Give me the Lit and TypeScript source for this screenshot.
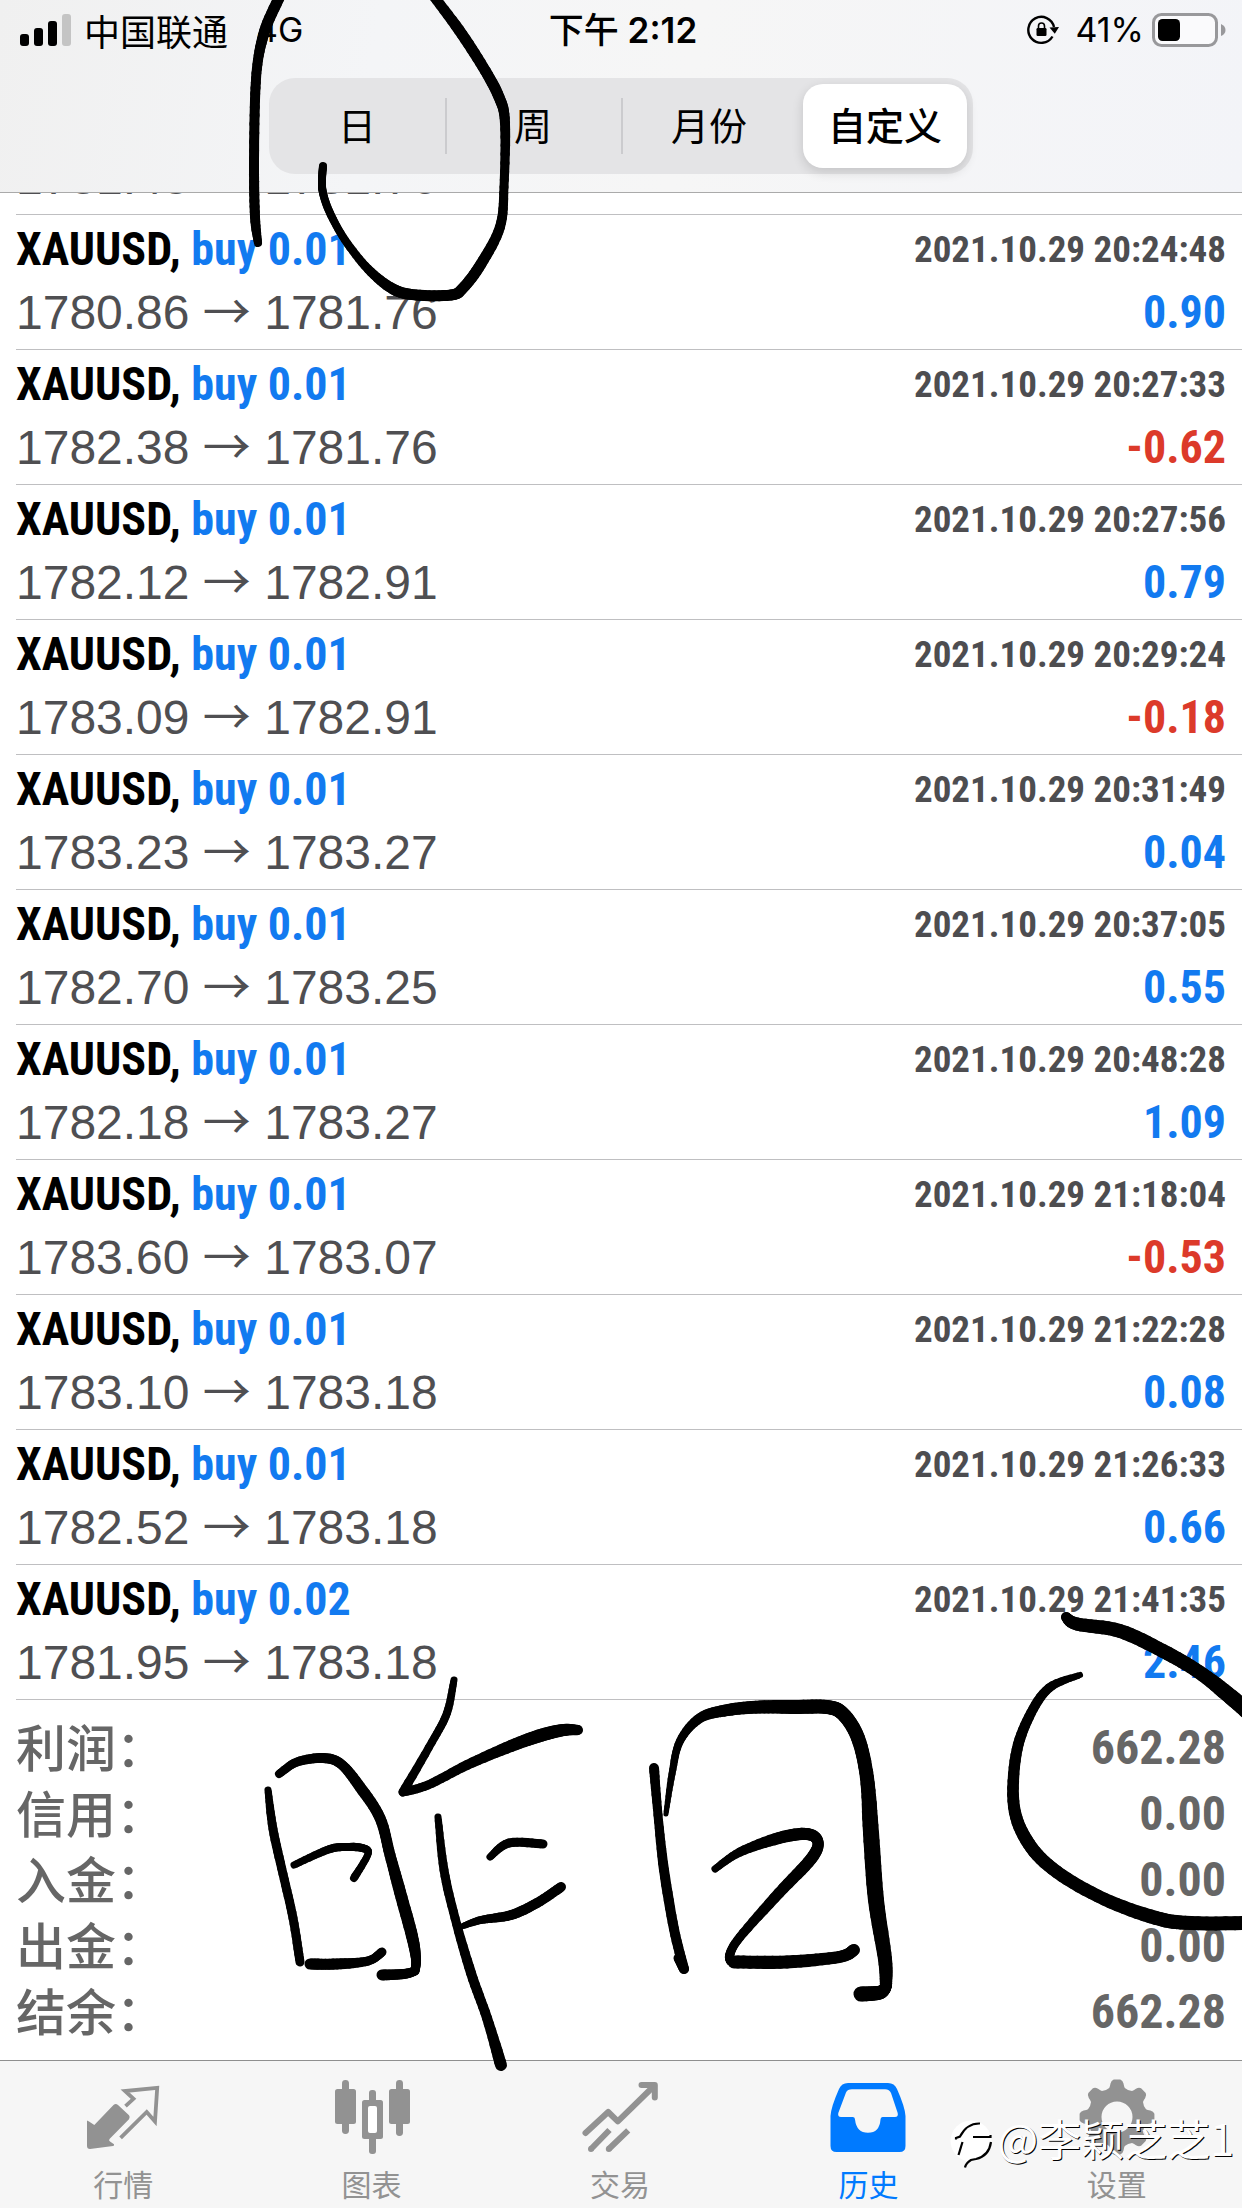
import { LitElement, html, svg, css } from "lit";
import { customElement, state } from "lit/decorators.js";
import { classMap } from "lit/directives/class-map.js";

interface Deal {
  side?: string;
  time?: string;
  open: string;
  close: string;
  profit: string;
}

const DEALS: Deal[] = [
  { open: "1781.43", close: "1781.76", profit: "0.33" },
  { side: "buy 0.01", time: "2021.10.29 20:24:48", open: "1780.86", close: "1781.76", profit: "0.90" },
  { side: "buy 0.01", time: "2021.10.29 20:27:33", open: "1782.38", close: "1781.76", profit: "-0.62" },
  { side: "buy 0.01", time: "2021.10.29 20:27:56", open: "1782.12", close: "1782.91", profit: "0.79" },
  { side: "buy 0.01", time: "2021.10.29 20:29:24", open: "1783.09", close: "1782.91", profit: "-0.18" },
  { side: "buy 0.01", time: "2021.10.29 20:31:49", open: "1783.23", close: "1783.27", profit: "0.04" },
  { side: "buy 0.01", time: "2021.10.29 20:37:05", open: "1782.70", close: "1783.25", profit: "0.55" },
  { side: "buy 0.01", time: "2021.10.29 20:48:28", open: "1782.18", close: "1783.27", profit: "1.09" },
  { side: "buy 0.01", time: "2021.10.29 21:18:04", open: "1783.60", close: "1783.07", profit: "-0.53" },
  { side: "buy 0.01", time: "2021.10.29 21:22:28", open: "1783.10", close: "1783.18", profit: "0.08" },
  { side: "buy 0.01", time: "2021.10.29 21:26:33", open: "1782.52", close: "1783.18", profit: "0.66" },
  { side: "buy 0.02", time: "2021.10.29 21:41:35", open: "1781.95", close: "1783.18", profit: "2.46" },
];

const TOTALS: [string, string][] = [
  ["利润：", "662.28"],
  ["信用：", "0.00"],
  ["入金：", "0.00"],
  ["出金：", "0.00"],
  ["结余：", "662.28"],
];

const PERIODS = ["日", "周", "月份", "自定义"];

/** Outline of an eight-toothed gear centred on 38,38. */
function gearPath(): string {
  const at = (r: number, deg: number) => {
    const a = ((deg - 90) * Math.PI) / 180;
    return `${(38 + r * Math.cos(a)).toFixed(1)} ${(38 + r * Math.sin(a)).toFixed(1)}`;
  };
  let d = "";
  for (let i = 0; i < 8; i++) {
    const c = i * 45;
    d += `${i ? "L" : "M"}${at(30, c - 15)}Q${at(31, c - 13)} ${at(34, c - 11)}`;
    d += `Q${at(37, c - 9)} ${at(37.5, c - 5)}L${at(37.5, c + 5)}`;
    d += `Q${at(37, c + 9)} ${at(34, c + 11)}Q${at(31, c + 13)} ${at(30, c + 15)}`;
    d += `Q${at(28.5, c + 22.5)} ${at(30, c + 30)}`;
  }
  return d + "ZM38 22.5a15.5 15.5 0 1 0 0 31a15.5 15.5 0 1 0 0-31Z";
}

const TABS = [
  {
    label: "行情",
    icon: svg`
      <path fill="currentColor" d="M2 41.5L4 42.5L9.3 46L28.5 26Q30.7 24 33 26L44 36.2Q45.6 38.3 44 40.3L24.5 60Q23.5 61.5 25 62.6L29 65.2Q29.5 66.6 28 67L5 70Q2 70 2 67Z"/>
      <path fill="none" stroke="currentColor" stroke-width="3.8" d="M40.5 27.2L48.5 19.8L40 12L72.2 8.9L70 42.5L61.7 33L35.6 58.8"/>`,
  },
  {
    label: "图表",
    icon: svg`
      <g fill="currentColor">
        <rect x="8" y="1" width="7" height="54" rx="3.4"/><rect x="1" y="10" width="21" height="35" rx="2.5"/>
        <rect x="35" y="11" width="7" height="64" rx="3"/><rect x="28" y="21" width="21" height="39" rx="2.5"/>
        <rect x="62" y="1" width="7" height="56" rx="3.4"/><rect x="55" y="10" width="21" height="35" rx="2.5"/>
      </g>
      <rect fill="#fff" x="34" y="27" width="9" height="27" rx="2"/>`,
  },
  {
    label: "交易",
    icon: svg`
      <g fill="none" stroke="currentColor" stroke-width="6">
        <path stroke-linecap="round" stroke-linejoin="round" d="M3.5 54L26.2 33L35.8 42.3L72 7"/>
        <path stroke-linecap="round" stroke-linejoin="round" d="M59.5 6H72.8V18.5"/>
        <path d="M9 70L27.5 51M26.8 70L46.2 51.3"/>
      </g>
      <circle fill="currentColor" cx="9" cy="70" r="3"/><circle fill="currentColor" cx="26.8" cy="70" r="3"/>`,
  },
  {
    label: "历史",
    icon: svg`<path fill="currentColor" fill-rule="evenodd" d="M.5 37Q1 28 9 10Q11.500 4 18 4H58Q64.500 4 67 10Q75 28 75.500 37V67Q75.500 73 69.500 73H6.500Q.5 73 .5 67ZM22 10.200Q17.500 10.200 16 13.500L8.300 34Q7.500 38 11 38H23Q25 38 25 40.500Q26.500 53.800 38 53.800Q49.500 53.800 50.500 40.500Q50.500 38 52.500 38H65Q68.500 38 67.700 34L61 14Q59.500 10.200 55 10.200Z"/>`,
  },
  { label: "设置", icon: svg`<path fill="currentColor" fill-rule="evenodd" d=${gearPath()}/>` },
];

type Pt = [number, number, number];

/** Freehand pen strokes: each point is x, y and pen width. */
const STROKES: Pt[][] = [
  [[281, -6, 11], [266, 27, 11], [258, 60, 10], [255, 100, 10], [254, 167, 10], [255, 217, 10], [258, 243, 8]],
  [[432, -6, 10], [459, 30, 11], [483, 67, 11], [499, 97, 11], [505, 123, 10], [504, 187, 9], [500, 227, 10], [481, 264, 11], [463, 288, 11], [451, 295, 11], [416, 295, 11], [393, 289, 11], [368, 269, 9], [345, 240, 8], [330, 213, 8], [323, 193, 8], [322, 180, 8], [323, 166, 8]],
  [[454, 1680, 7], [447, 1713, 8], [432, 1742, 8], [403, 1792, 9]],
  [[403, 1792, 9], [428, 1785, 9], [467, 1765, 10], [511, 1746, 12], [542, 1735, 13], [564, 1730, 12], [578, 1730, 10]],
  [[279, 1774, 8], [297, 1762, 9], [323, 1758, 10], [341, 1764, 10], [360, 1787, 11], [380, 1818, 11], [390, 1855, 11], [400, 1892, 12], [412, 1936, 12], [416, 1959, 10], [415, 1971, 9]],
  [[415, 1971, 9], [404, 1974, 10], [382, 1975, 11]],
  [[268, 1790, 7], [273, 1829, 9], [283, 1874, 9], [293, 1918, 9], [300, 1962, 9]],
  [[294, 1865, 7], [327, 1850, 8], [344, 1847, 8], [362, 1848, 8], [368, 1854, 7], [354, 1878, 8]],
  [[310, 1964, 11], [337, 1964, 11], [368, 1961, 9], [382, 1952, 9]],
  [[438, 1817, 7], [444, 1870, 9], [455, 1918, 9], [471, 1973, 10], [487, 2018, 10], [501, 2065, 12]],
  [[490, 1857, 7], [509, 1843, 9], [543, 1844, 9]],
  [[463, 1926, 6], [481, 1920, 8], [511, 1915, 10], [537, 1903, 10], [561, 1887, 10]],
  [[654, 1768, 10], [658, 1815, 9], [664, 1870, 10], [674, 1929, 10], [684, 1969, 10]],
  [[678, 1958, 9], [684, 1969, 10]],
  [[666, 1814, 5], [672, 1774, 7], [680, 1741, 8], [700, 1718, 10], [728, 1710, 12], [760, 1707, 13], [795, 1707, 14], [827, 1707, 14], [843, 1714, 14], [858, 1738, 14], [867, 1778, 14], [871, 1833, 16], [876, 1900, 16], [885, 1959, 14], [886, 1985, 12]],
  [[886, 1985, 12], [884, 1990, 12], [878, 1993, 14], [861, 1994, 15]],
  [[715, 1869, 7], [740, 1852, 9], [779, 1838, 12], [807, 1834, 12], [818, 1842, 11], [811, 1859, 12], [779, 1893, 11], [740, 1937, 9], [730, 1954, 9], [731, 1961, 10]],
  [[734, 1962, 13], [787, 1962, 13], [839, 1957, 12], [854, 1950, 12]],
  [[1066, 1617, 10], [1077, 1624, 13], [1120, 1631, 14], [1163, 1651, 14], [1199, 1672, 14], [1231, 1697, 16], [1256, 1719, 16]],
  [[1080, 1675, 6], [1049, 1688, 9], [1029, 1717, 10], [1016, 1755, 11], [1014, 1807, 12], [1029, 1844, 13], [1057, 1872, 13], [1104, 1899, 13], [1156, 1918, 14], [1191, 1923, 14], [1256, 1923, 14]],
];

/** Smooths a stroke through its points and draws it as short round-capped pieces. */
function penStroke(pts: Pt[]) {
  const steps = 8;
  const out: Pt[] = [];
  for (let i = 0; i < pts.length - 1; i++) {
    const p0 = pts[Math.max(0, i - 1)];
    const p1 = pts[i];
    const p2 = pts[i + 1];
    const p3 = pts[Math.min(pts.length - 1, i + 2)];
    const mix = (k: number, t: number) =>
      0.5 *
      (2 * p1[k] +
        (p2[k] - p0[k]) * t +
        (2 * p0[k] - 5 * p1[k] + 4 * p2[k] - p3[k]) * t * t +
        (3 * p1[k] - p0[k] - 3 * p2[k] + p3[k]) * t * t * t);
    for (let s = 0; s < steps; s++) {
      const t = s / steps;
      out.push([mix(0, t), mix(1, t), mix(2, t)]);
    }
  }
  out.push(pts[pts.length - 1]);
  return out.slice(1).map((p, i) => {
    const q = out[i];
    return svg`<path d="M${q[0].toFixed(1)} ${q[1].toFixed(1)}L${p[0].toFixed(1)} ${p[1].toFixed(1)}" stroke-width=${((p[2] + q[2]) / 2).toFixed(1)}/>`;
  });
}

@customElement("app-root")
export class AppRoot extends LitElement {
  @state() private period = 3;
  @state() private tab = 3;

  static styles = css`
    :host {
      display: block;
      font-family: "Inter", "Noto Sans CJK SC", sans-serif;
      color: #000;
    }
    .screen {
      position: relative;
      display: flex;
      flex-direction: column;
      height: 100vh;
      overflow: hidden;
      background: #fff;
    }
    .top {
      flex: none;
      background: linear-gradient(100deg, #f0f0f0 0%, #f4f5f7 30%, #f6f6f6 55%, #f3f4f8 100%);
      border-bottom: 1px solid #aaa;
    }
    .status {
      display: grid;
      grid-template-columns: 1fr auto 1fr;
      align-items: center;
      height: 60px;
      padding: 0 16px 0 20px;
      font-size: 34px;
      line-height: 60px;
      white-space: nowrap;
    }
    .carrier,
    .power {
      display: flex;
      align-items: center;
    }
    .carrier {
      gap: 12px;
    }
    .operator {
      font-family: "Noto Sans CJK SC", sans-serif;
      font-size: 36px;
      line-height: 56px;
      margin-right: 16px;
    }
    .clock {
      font-weight: 600;
      font-size: 35px;
    }
    .clock-part {
      font-family: "Noto Sans CJK SC", sans-serif;
      font-weight: 500;
      line-height: 0;
    }
    .power {
      justify-content: flex-end;
      gap: 8px;
    }
    .lock {
      margin-right: 8px;
    }
    .segments {
      display: grid;
      grid-template-columns: repeat(4, 1fr);
      width: 704px;
      max-width: 90%;
      height: 96px;
      margin: 18px auto;
      border-radius: 26px;
      background: #e4e4e6;
    }
    .cell {
      display: grid;
      align-items: center;
      background: linear-gradient(#cbcbce, #cbcbce) left center / 2px 56px no-repeat;
    }
    .cell.plain {
      background: none;
    }
    .segment {
      height: 84px;
      margin: 0 6px;
      padding: 0 0 4px;
      border: 0;
      border-radius: 20px;
      background: none;
      color: #000;
      font: 400 38px/80px "Noto Sans CJK SC", sans-serif;
    }
    .segment.on {
      background: #fff;
      font-weight: 500;
      box-shadow: 0 4px 12px rgba(0, 0, 0, 0.14);
    }
    .history {
      flex: 1;
      min-height: 0;
      display: flex;
      flex-direction: column;
      justify-content: flex-end;
      overflow: hidden;
    }
    .deals {
      list-style: none;
      margin: 0;
      padding: 0 0 0 16px;
    }
    .deal {
      padding: 3px 16px 5px 0;
      border-bottom: 1px solid #bfbfc1;
    }
    .line {
      display: flex;
      justify-content: space-between;
      align-items: center;
      height: 63px;
      line-height: 63px;
      white-space: nowrap;
    }
    .symbol,
    .profit,
    .time {
      font-family: "Roboto Condensed", "Roboto", sans-serif;
      font-weight: 700;
      font-size: 46px;
    }
    .side,
    .profit {
      color: #127af0;
    }
    .time {
      font-size: 37px;
      color: #4d4d50;
    }
    .prices {
      font-family: "Liberation Sans", Arial, sans-serif;
      font-size: 48px;
      color: #4f4f52;
    }
    .arrow {
      font-family: "Noto Sans CJK SC", sans-serif;
      line-height: 0;
    }
    .profit.loss {
      color: #dc3a2a;
    }
    .totals {
      margin: 0;
      padding: 15px 16px;
      color: #666;
    }
    .total {
      display: flex;
      justify-content: space-between;
      height: 66px;
      line-height: 66px;
    }
    .name {
      font-family: "Noto Sans CJK SC", sans-serif;
      font-weight: 500;
      font-size: 50px;
      line-height: 60px;
    }
    .sum {
      margin: 0;
      font-family: "Roboto Condensed", "Roboto", sans-serif;
      font-weight: 700;
      font-size: 48px;
    }
    .tabs {
      flex: none;
      display: grid;
      grid-template-columns: repeat(5, 1fr);
      border-top: 1px solid #8f8f8f;
      background: #f6f6f6;
    }
    .tab {
      display: flex;
      flex-direction: column;
      align-items: center;
      gap: 10px;
      padding: 18px 2px 7px 0;
      border: 0;
      background: none;
      color: #929292;
      font: 400 30px/36px "Noto Sans CJK SC", sans-serif;
    }
    .tab.on {
      color: #007aff;
    }
    .ink {
      position: absolute;
      inset: 0;
      width: 100%;
      height: 100%;
      pointer-events: none;
    }
    .signature {
      position: absolute;
      right: 8px;
      bottom: 40px;
      display: flex;
      align-items: flex-start;
      gap: 4px;
      color: #fff;
      font: 400 43px/38px "Noto Sans CJK SC", sans-serif;
      text-shadow: 1px 1px 0 #000;
      pointer-events: none;
    }
    svg {
      display: block;
      flex: none;
    }
  `;

  private renderDeal(d: Deal) {
    return html`<li class="deal">
      ${d.side
        ? html`<div class="line">
            <span class="symbol">XAUUSD, <span class="side">${d.side}</span></span>
            <time class="time">${d.time}</time>
          </div>`
        : null}
      <div class="line">
        <span class="prices">${d.open} <span class="arrow">→</span> ${d.close}</span>
        <span class=${classMap({ profit: true, loss: d.profit.startsWith("-") })}>${d.profit}</span>
      </div>
    </li>`;
  }

  render() {
    return html`<div class="screen">
      <header class="top">
        <div class="status">
          <div class="carrier">
            <svg width="52" height="34" viewBox="0 0 52 34">
              <rect x="0" y="21" width="9" height="12" rx="3" />
              <rect x="14" y="15" width="9" height="18" rx="3" />
              <rect x="28" y="8" width="9" height="25" rx="3" />
              <rect x="42" y="1" width="9" height="32" rx="3" fill="#c4c4c4" />
            </svg>
            <span class="operator">中国联通</span>
            <span>4G</span>
          </div>
          <div class="clock"><span class="clock-part">下午</span> 2:12</div>
          <div class="power">
            <svg class="lock" width="32" height="30" viewBox="0 0 32 30">
              <path d="M25.5 21.500A13 13 0 1 1 27 12" fill="none" stroke="#000" stroke-width="2.400" />
              <path d="M22.500 12.500L32 12L27.800 18.800Z" />
              <rect x="9.500" y="13" width="10" height="8" rx="1.200" />
              <path d="M11.500 13.500V11a3 3 0 0 1 6 0V13.500" fill="none" stroke="#000" stroke-width="1.600" />
            </svg>
            <span>41%</span>
            <svg width="74" height="34" viewBox="0 0 74 34">
              <rect x="1.500" y="1.500" width="63" height="31" rx="8" fill="#fafafc" stroke="#98989b" stroke-width="3" />
              <rect x="6" y="6" width="22" height="22" rx="4.500" />
              <path d="M69 11Q73.500 13 73.500 17T69 23Z" fill="#98989b" />
            </svg>
          </div>
        </div>
        <div class="segments">
          ${PERIODS.map(
            (p, i) => html`<div class=${classMap({ cell: true, plain: i === 0 || i === this.period })}>
              <button
                class=${classMap({ segment: true, on: i === this.period })}
                aria-pressed=${i === this.period}
                @click=${() => (this.period = i)}
              >${p}</button>
            </div>`,
          )}
        </div>
      </header>

      <main class="history">
        <ul class="deals">${DEALS.map((d) => this.renderDeal(d))}</ul>
        <dl class="totals">
          ${TOTALS.map(([k, v]) => html`<div class="total"><dt class="name">${k}</dt><dd class="sum">${v}</dd></div>`)}
        </dl>
      </main>

      <nav class="tabs">
        ${TABS.map(
          (t, i) => html`<button class=${classMap({ tab: true, on: i === this.tab })} @click=${() => (this.tab = i)}>
            <svg width="76" height="76" viewBox="0 0 76 76">${t.icon}</svg>
            <span>${t.label}</span>
          </button>`,
        )}
      </nav>

      <svg class="ink" viewBox="0 0 1242 2208" preserveAspectRatio="none">
        <g fill="none" stroke="#000" stroke-linecap="round">${STROKES.map(penStroke)}</g>
      </svg>

      <div class="signature">
        <svg width="44" height="50" viewBox="0 0 44 50">
          <circle cx="22" cy="23" r="20.500" fill="#fff" />
          <g fill="none" stroke="#000" stroke-width="2.200">
            <path d="M7 21.500V20L11 18.500Q18 5 31 5.500" />
            <path d="M13.500 24L9.500 37" />
            <path d="M24 19H41.500V17" />
            <path d="M42 24Q40 38 27 41L22 42Q17 45 16 49.500" />
          </g>
        </svg>
        <span>@李颖芝芝1</span>
      </div>
    </div>`;
  }
}
